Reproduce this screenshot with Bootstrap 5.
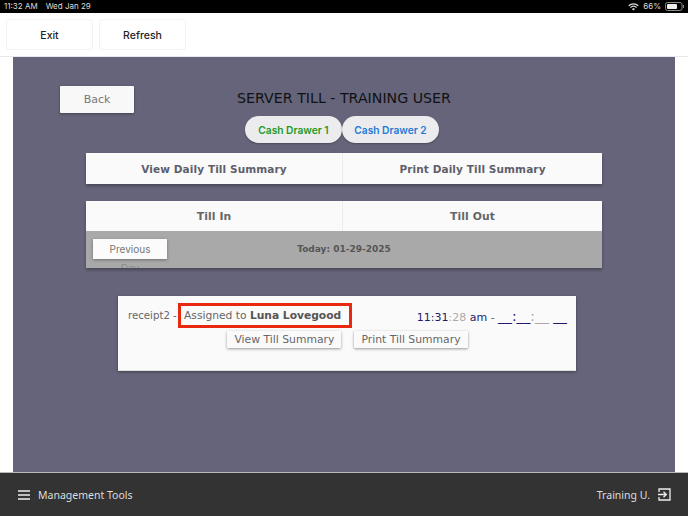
<!DOCTYPE html>
<html lang="en">
<head>
<meta charset="utf-8">
<title>Server Till</title>
<link href="https://cdn.jsdelivr.net/npm/bootstrap@5.3.0/dist/css/bootstrap.min.css" rel="stylesheet">
<style>
html,body{height:516px;overflow:hidden;background:#fff}
body{font-family:"DejaVu Sans",sans-serif;display:flex;flex-direction:column;width:688px}
.ios-bar{height:13px;background:#000;color:#ddd;font:8px/13px "Inter","Liberation Sans",sans-serif;padding:0 3px 0 4px;flex:none}
.ios-bar .when{margin-left:8px}
.tool-bar{height:44px;padding:6px;gap:6px;flex:none;background:#fff;border-bottom:1px solid #e8e8ec}
.tool-btn{width:87px;height:31px;padding:1px 0 0;font:500 10.5px "Inter","Liberation Sans",sans-serif;color:#222;background:#fff;border:1px solid #f3f3f3;border-radius:3px}
.stage-wrap{flex:1;min-height:0;padding:0 13px 0 13px;background:#fff}
.stage{height:100%;background:#65647a;padding:29px 73px 0;position:relative}
.head-row{height:27px;position:relative;justify-content:center;align-items:center}
.back-btn{position:absolute;left:-26px;top:0;width:74px;height:27px;padding:0;background:#f8f8f8;color:#777;font:11px "DejaVu Sans",sans-serif;border:0;border-radius:1px;box-shadow:0 1px 3px rgba(0,0,0,.35)}
.page-name{font-size:14.2px;font-weight:400;color:#111;margin:0;line-height:24px;padding-bottom:3px}
.pill-row{margin-top:3px;height:27px;padding-right:4px}
.pill-btn{width:97px;height:27px;padding:0;border:0;border-radius:14px;background:#ececee;font:600 10.2px "Inter","Liberation Sans",sans-serif;box-shadow:0 1px 2px rgba(0,0,0,.25)}
.pill-green{color:#1f9a1f}
.pill-blue{color:#1f7ad6}
.split-bar{background:#fafafa;box-shadow:0 2px 3px rgba(0,0,0,.3)}
.split-cell{width:260px;height:31px;padding:3px 0 0;border:0;border-radius:0;background:transparent;font-size:10.5px;font-weight:700;color:#5f5f6b;letter-spacing:.1px}
.split-cell:first-child{width:256px}
.split-cell+.split-cell{border-left:1px solid #ececec}
.bar-one{margin-top:10px}
.bar-two{margin-top:17px}
.bar-two .split-cell{height:30px;color:#666;font-size:10.8px}
.date-row{height:37px;background:#a9a9a9;position:relative;overflow:hidden;justify-content:center;align-items:center;font-size:9px;font-weight:700;color:#555}
.prev-btn{position:absolute;left:7px;top:8px;width:74px;padding:0;height:auto;border:0;background:none;font:10px/20px "Inter","Liberation Sans",sans-serif;color:#777}
.prev-btn span{display:block;background:#fbfbfb;box-shadow:0 1px 3px rgba(0,0,0,.35)}
.prev-btn em{display:block;font-style:normal;line-height:16px;color:#8a8a8a;margin-top:1px}
.till-box{margin:28px 26px 0 32px;height:75px;background:#fafafa;border-bottom:1px solid #ddd;box-shadow:0 1px 3px rgba(0,0,0,.35);padding:0 9px 0 10px;font-size:11px;color:#666}
.till-top{height:37px;align-items:center;justify-content:space-between;padding-top:3px}
.rcpt{font-size:10.2px}
.red-mark{outline:3px solid #e8280f;padding:3px 8px 3px 3px;margin-left:1px;font-size:10.7px}
.red-mark b{color:#555}
.t-navy{color:#1d1a6e}
.t-grey{color:#aaa}
.blanks{font-size:13.8px}
.act-row{gap:13px;justify-content:center;margin-top:-2px}
.act-btn{height:17px;padding:0 7px;border:0;border-radius:1px;background:#fafafa;color:#666;font-size:10.8px;line-height:17px;box-shadow:0 1px 3px rgba(0,0,0,.4)}
.foot-bar{height:44px;flex:none;background:#333;border-top:1px solid #bbb;color:#ddd;font:10.5px "Noto Sans","Open Sans",sans-serif;padding:0 17px 0 18px;justify-content:space-between;align-items:center}
</style>
</head>
<body>
<div class="ios-bar d-flex justify-content-between">
  <div><span>11:32 AM</span><span class="when">Wed Jan 29</span></div>
  <div class="d-flex align-items-center gap-1">
    <svg width="11" height="8" viewBox="0 0 11 8" fill="none" stroke="#ddd" stroke-width="1.2"><path d="M.7 2.8a7 7 0 0 1 9.6 0"/><path d="M2.4 4.5a4.6 4.6 0 0 1 6.2 0"/><path d="M5.5 7.6 3.9 6a2.2 2.2 0 0 1 3.2 0z" fill="#ddd" stroke="none"/></svg>
    <span>66%</span>
    <svg width="20" height="9" viewBox="0 0 20 9"><rect x=".5" y=".5" width="16.5" height="8" rx="2" fill="none" stroke="#888"/><rect x="2" y="2" width="10" height="5" rx="1" fill="#eee"/><rect x="18" y="3" width="1" height="3" fill="#888"/></svg>
  </div>
</div>
<div class="tool-bar d-flex">
  <button type="button" class="btn tool-btn">Exit</button>
  <button type="button" class="btn tool-btn">Refresh</button>
</div>
<div class="stage-wrap">
  <main class="stage">
    <div class="head-row d-flex">
      <button type="button" class="btn back-btn">Back</button>
      <h1 class="page-name">SERVER TILL - TRAINING USER</h1>
    </div>
    <div class="pill-row d-flex justify-content-center">
      <button type="button" class="btn pill-btn pill-green">Cash Drawer 1</button>
      <button type="button" class="btn pill-btn pill-blue">Cash Drawer 2</button>
    </div>
    <div class="split-bar bar-one d-flex">
      <button type="button" class="btn split-cell">View Daily Till Summary</button>
      <button type="button" class="btn split-cell">Print Daily Till Summary</button>
    </div>
    <div class="split-bar bar-two">
      <div class="d-flex">
        <button type="button" class="btn split-cell">Till In</button>
        <button type="button" class="btn split-cell">Till Out</button>
      </div>
      <div class="date-row d-flex">
        <button type="button" class="btn prev-btn"><span>Previous</span><em>Day</em></button>
        <span>Today: 01-29-2025</span>
      </div>
    </div>
    <div class="till-box">
      <div class="till-top d-flex">
        <div><span class="rcpt">receipt2 - </span><span class="red-mark">Assigned to <b>Luna Lovegood</b></span></div>
        <div><span class="t-navy">11:31</span><span class="t-grey">:28</span> <span class="t-navy">am</span> - <span class="blanks"><span class="t-navy">__:__</span><span class="t-grey">:__</span> <span class="t-navy">__</span></span></div>
      </div>
      <div class="act-row d-flex">
        <button type="button" class="btn act-btn">View Till Summary</button>
        <button type="button" class="btn act-btn">Print Till Summary</button>
      </div>
    </div>
  </main>
</div>
<footer class="foot-bar d-flex">
  <div class="d-flex align-items-center gap-2">
    <svg width="12" height="10" viewBox="0 0 12 10" fill="none" stroke="#eee" stroke-width="1.4"><path d="M0 1h12M0 5h12M0 9h12"/></svg>
    <span>Management Tools</span>
  </div>
  <div class="d-flex align-items-center gap-2">
    <span>Training U.</span>
    <svg width="13" height="13" viewBox="0 0 13 13" fill="none" stroke="#eee" stroke-width="1.3"><path d="M1 4V1h11v11H1V9"/><path d="M0 6.5h8M5.5 3.8l2.8 2.7-2.8 2.7"/></svg>
  </div>
</footer>
<script src="https://cdn.jsdelivr.net/npm/bootstrap@5.3.0/dist/js/bootstrap.bundle.min.js"></script>
</body>
</html>
